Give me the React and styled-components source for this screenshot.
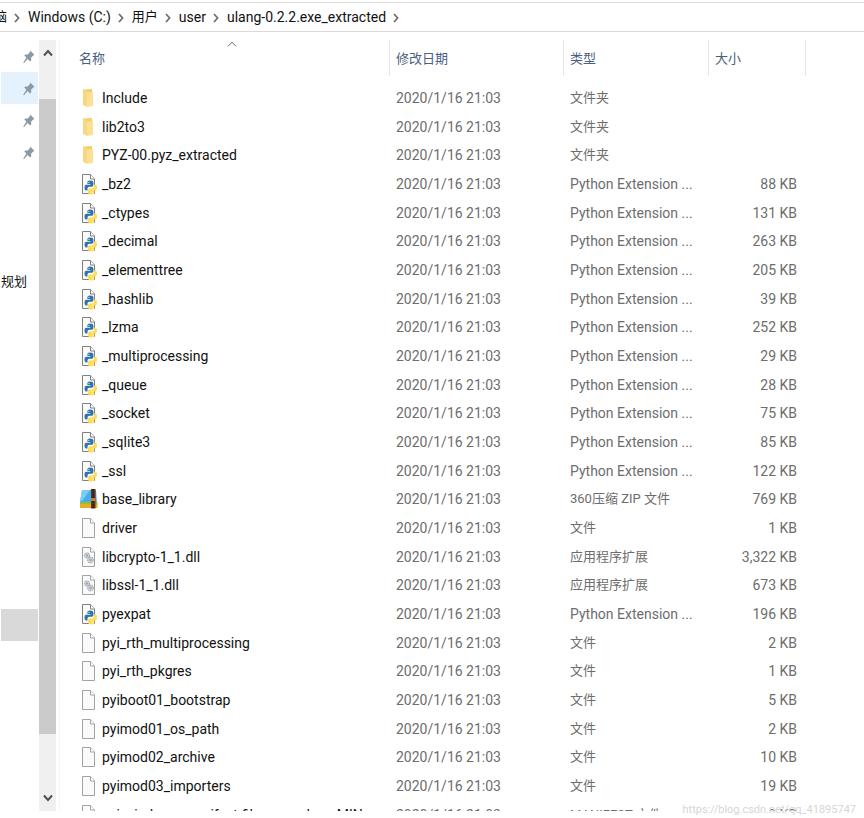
import React from "react";
import styled, { createGlobalStyle } from "styled-components";

const GlobalStyle = createGlobalStyle`
  * { box-sizing: border-box; }
  body {
    margin: 0;
    background: #fff;
    color: #111;
    font: 14px/20px Roboto, "Noto Sans CJK SC", sans-serif;
  }
  button { border: 0; padding: 0; background: none; font: inherit; color: inherit; }
`;

const Explorer = styled.main`
  position: relative;
  display: flex;
  flex-direction: column;
  height: 100vh;
  padding: 2px 0 7px;
  overflow: hidden;
`;

const AddressBar = styled.nav`
  display: flex;
  align-items: center;
  flex: none;
  height: 30px;
  border-top: 1px solid #dcdcdc;
  border-bottom: 1px solid #d9d9d9;
  white-space: nowrap;
  overflow: hidden;
`;

const Crumb = styled.a`
  color: #111;
  text-decoration: none;
  font-size: ${(p) => (p.$cjk ? 13 : 14)}px;
`;

const ClippedCrumb = styled(Crumb)`
  display: flex;
  justify-content: flex-end;
  width: 7px;
  overflow: hidden;
`;

const CrumbArrow = styled.svg`
  flex: none;
  width: 6px;
  height: 10px;
  margin: 1px 8px 0 7px;
`;

const Body = styled.div`
  display: flex;
  flex: 1;
  min-height: 0;
  padding-top: 8px;
`;

const Sidebar = styled.aside`
  flex: none;
  width: 39px;
  padding: 0 1px;
  overflow: hidden;
`;

const SideItem = styled.button`
  display: flex;
  align-items: center;
  justify-content: ${(p) => (p.$label ? "flex-start" : "flex-end")};
  width: 100%;
  height: 32px;
  margin-top: ${(p) => p.$gap || 0}px;
  padding: ${(p) => (p.$label ? "0" : "2px 3px 0 0")};
  background: ${(p) => p.$fill || "transparent"};
  font-size: 13px;
  white-space: nowrap;
`;

const ScrollBar = styled.div`
  display: flex;
  flex-direction: column;
  flex: none;
  width: 17px;
  background: #f0f0f0;
`;

const ScrollButton = styled.button`
  display: flex;
  align-items: center;
  justify-content: center;
  height: 26px;
`;

const Track = styled.div`
  flex: ${(p) => p.$share};
`;

const Thumb = styled(Track)`
  background: #cbcbcb;
`;

const FilePane = styled.section`
  flex: 1;
  min-width: 0;
  margin-left: 3px;
  padding-left: 13px;
  border-left: 1px solid #f5f5f5;
  overflow: hidden;
`;

const FileTable = styled.table`
  width: 100%;
  table-layout: fixed;
  border-collapse: collapse;
`;

const Col = styled.col`
  width: ${(p) => (p.$width ? `${p.$width}px` : "auto")};
`;

const HeadCell = styled.th`
  position: relative;
  height: 43px;
  padding: 0;
  vertical-align: top;
  text-align: left;
  font-size: 13px;
  font-weight: 400;
  color: #4a607f;
`;

const HeadLabel = styled.div`
  height: 36px;
  padding: 0 6px;
  border-right: 1px solid #e5e5e5;
  line-height: 37px;
`;

const SortMark = styled.svg`
  position: absolute;
  top: 1px;
  left: 50%;
  width: 10px;
  height: 6px;
  margin-left: -5px;
`;

const FileRow = styled.tr`
  height: 29px;
  &:nth-child(3n) { height: 28px; }
`;

const Cell = styled.td`
  padding: 0 6px;
  color: #6d6d6d;
  font-size: ${(p) => (p.$cjk ? 13 : 14)}px;
  text-align: ${(p) => (p.$end ? "right" : "left")};
  white-space: nowrap;
  overflow: hidden;
`;

const SizeCell = styled(Cell)`
  padding-right: 9px;
`;

const NameCell = styled(Cell)`
  padding-left: 7px;
  color: #111;
`;

const NameGroup = styled.div`
  display: flex;
  align-items: center;
  gap: 3px;
`;

const FileIcon = styled.svg`
  flex: none;
  width: 19px;
  height: 22px;
`;

const Watermark = styled.div`
  position: absolute;
  right: 8px;
  bottom: 0;
  color: #d6d6d6;
  font: 11px/16px Roboto, Arial, sans-serif;
`;

const Arrow = () => (
  <CrumbArrow viewBox="0 0 6 10" fill="none" stroke="#6c6c6c" strokeWidth="1.7" aria-hidden="true">
    <path d="M1 1 4.6 5 1 9" />
  </CrumbArrow>
);

const Pin = () => (
  <svg width="12" height="14" viewBox="0 0 12 14" fill="#8c98a4" aria-hidden="true">
    <path d="M7.3.5 11.5 5l-1.3.4-2.1 2.4.1 2.7-1.1 1L4.6 9 1 13.2l-.7-.6L3.4 7.8 1.3 5.4l1-1 2.5.2L7 2.1z" />
  </svg>
);

const Chevron = ({ down }) => (
  <svg width="10" height="8" viewBox="0 0 10 8" fill="none" stroke="#505050" strokeWidth="2" aria-hidden="true">
    <path d={down ? "M1 1.5 5 6l4-4.5" : "M1 6.5 5 2l4 4.5"} />
  </svg>
);

const Page = ({ stroke = "#a2a2a2", fill = "#fafafa" }) => (
  <>
    <path d="M2.5 1.5h8l4 4.5v14.5h-12z" fill={fill} stroke={stroke} />
    <path d="M10.5 1.5V6h4" fill="#fff" stroke={stroke} />
  </>
);

const iconArt = {
  folder: (
    <>
      <path d="M3 2.5 12 2v17l-9-1z" fill="#f3cf6b" />
      <path d="M7 5.5 13 5v14L7 20z" fill="#fce096" />
      <path d="M3 2.5 7 4v16L3 18z" fill="#f7d87e" />
    </>
  ),
  python: (
    <>
      <Page stroke="#808080" />
      <path
        d="M10 7.5c-2 0-2.6.9-2.6 2v1.600h2.900v.6H6.500c-1.400-.1-2 1-2 2.900 0 1.900.7 2.900 1.700 2.900h1.300V15.700c0-1.200.8-2 1.900-2h2.500c.9 0 1.500-.7 1.500-1.700V9.500c0-1.200-1-2-3.400-2z"
        fill="#2f74ad"
      />
      <path
        d="M11.500 21.500c2.200 0 2.900-.9 2.900-2v-1.500h-3v-.6h3.900c1.200 0 1.700-1.100 1.700-2.900s-.7-2.900-1.800-2.900h-1.200v1.900c0 1.200-.8 2-1.900 2H9.600c-.9 0-1.500.7-1.500 1.700v2.300c0 1.200 1 2 3.400 2z"
        fill="#ffdc50"
      />
      <circle cx="8.9" cy="9.3" r=".6" fill="#fff" />
      <circle cx="12.9" cy="19.8" r=".6" fill="#fff" />
    </>
  ),
  zip: (
    <>
      <path d="M2 2h14l1 13H0z" fill="#45aeea" />
      <path d="M2 2h8L2 13H0z" fill="#7ccdf5" />
      <path d="M0 14h17.5v3H0z" fill="#95bd39" />
      <path d="M0 16h17.5v4H0z" fill="#e8ad27" />
      <path d="M11 1h4.5v19.5H11z" fill="#64331f" />
      <path d="M13.2 1v19.5" stroke="#291711" strokeWidth="1.5" strokeDasharray="1.5 1" />
      <path d="M11 10h4.5v3H11z" fill="#c77c32" />
    </>
  ),
  file: <Page />,
  dll: (
    <>
      <Page />
      <g fill="#dce2e7" stroke="#a0a7ae" strokeWidth="1.2">
        <circle cx="7" cy="9.5" r="2.5" strokeDasharray="1.3 .5" />
        <circle cx="10.5" cy="14" r="2.8" strokeDasharray="1.3 .5" />
        <circle cx="7" cy="9.5" r=".7" />
        <circle cx="10.5" cy="14" r=".8" />
      </g>
    </>
  ),
};

const PYD = "Python Extension ...";
const DLL = "应用程序扩展";
const FILE = "文件";
const DATE = "2020/1/16 21:03";

const files = [
  ["folder", "Include", "文件夹", ""],
  ["folder", "lib2to3", "文件夹", ""],
  ["folder", "PYZ-00.pyz_extracted", "文件夹", ""],
  ["python", "_bz2", PYD, "88 KB"],
  ["python", "_ctypes", PYD, "131 KB"],
  ["python", "_decimal", PYD, "263 KB"],
  ["python", "_elementtree", PYD, "205 KB"],
  ["python", "_hashlib", PYD, "39 KB"],
  ["python", "_lzma", PYD, "252 KB"],
  ["python", "_multiprocessing", PYD, "29 KB"],
  ["python", "_queue", PYD, "28 KB"],
  ["python", "_socket", PYD, "75 KB"],
  ["python", "_sqlite3", PYD, "85 KB"],
  ["python", "_ssl", PYD, "122 KB"],
  ["zip", "base_library", "360压缩 ZIP 文件", "769 KB"],
  ["file", "driver", FILE, "1 KB"],
  ["dll", "libcrypto-1_1.dll", DLL, "3,322 KB"],
  ["dll", "libssl-1_1.dll", DLL, "673 KB"],
  ["python", "pyexpat", PYD, "196 KB"],
  ["file", "pyi_rth_multiprocessing", FILE, "2 KB"],
  ["file", "pyi_rth_pkgres", FILE, "1 KB"],
  ["file", "pyiboot01_bootstrap", FILE, "5 KB"],
  ["file", "pyimod01_os_path", FILE, "2 KB"],
  ["file", "pyimod02_archive", FILE, "10 KB"],
  ["file", "pyimod03_importers", FILE, "19 KB"],
  ["file", "pyi-windows-manifest-filename ulang.MIN...", "MANIFEST 文件", "0 KB"],
];

export default function App() {
  return (
    <>
      <GlobalStyle />
      <Explorer>
        <AddressBar aria-label="路径">
          <ClippedCrumb href="#pc" $cjk>脑</ClippedCrumb>
          <Arrow />
          <Crumb href="#c">Windows (C:)</Crumb>
          <Arrow />
          <Crumb href="#users" $cjk>用户</Crumb>
          <Arrow />
          <Crumb href="#user">user</Crumb>
          <Arrow />
          <Crumb href="#folder">ulang-0.2.2.exe_extracted</Crumb>
          <Arrow />
        </AddressBar>
        <Body>
          <Sidebar>
            <SideItem aria-label="已固定 1"><Pin /></SideItem>
            <SideItem aria-label="已固定 2" $fill="#e3f2fd"><Pin /></SideItem>
            <SideItem aria-label="已固定 3"><Pin /></SideItem>
            <SideItem aria-label="已固定 4"><Pin /></SideItem>
            <SideItem $label $gap={98}>规划</SideItem>
            <SideItem aria-label="当前驱动器" $fill="#d9d9d9" $gap={311} />
          </Sidebar>
          <ScrollBar>
            <ScrollButton aria-label="向上滚动"><Chevron /></ScrollButton>
            <Track $share={33} />
            <Thumb $share={635} />
            <Track $share={51} />
            <ScrollButton aria-label="向下滚动"><Chevron down /></ScrollButton>
          </ScrollBar>
          <FilePane>
            <FileTable>
              <colgroup>
                <Col $width={317} />
                <Col $width={174} />
                <Col $width={145} />
                <Col $width={97} />
                <Col />
              </colgroup>
              <thead>
                <tr>
                  <HeadCell>
                    <HeadLabel>名称</HeadLabel>
                    <SortMark viewBox="0 0 10 6" fill="none" stroke="#777" aria-hidden="true">
                      <path d="M1 5.5 5 1l4 4.5" />
                    </SortMark>
                  </HeadCell>
                  <HeadCell><HeadLabel>修改日期</HeadLabel></HeadCell>
                  <HeadCell><HeadLabel>类型</HeadLabel></HeadCell>
                  <HeadCell><HeadLabel>大小</HeadLabel></HeadCell>
                  <HeadCell as="td" />
                </tr>
              </thead>
              <tbody>
                {files.map(([icon, name, type, size]) => (
                  <FileRow key={name}>
                    <NameCell>
                      <NameGroup>
                        <FileIcon viewBox="0 0 19 22" aria-hidden="true">{iconArt[icon]}</FileIcon>
                        {name}
                      </NameGroup>
                    </NameCell>
                    <Cell>{DATE}</Cell>
                    <Cell $cjk={type !== PYD}>{type}</Cell>
                    <SizeCell $end>{size}</SizeCell>
                    <td />
                  </FileRow>
                ))}
              </tbody>
            </FileTable>
          </FilePane>
        </Body>
        <Watermark>https://blog.csdn.net/qq_41895747</Watermark>
      </Explorer>
    </>
  );
}
